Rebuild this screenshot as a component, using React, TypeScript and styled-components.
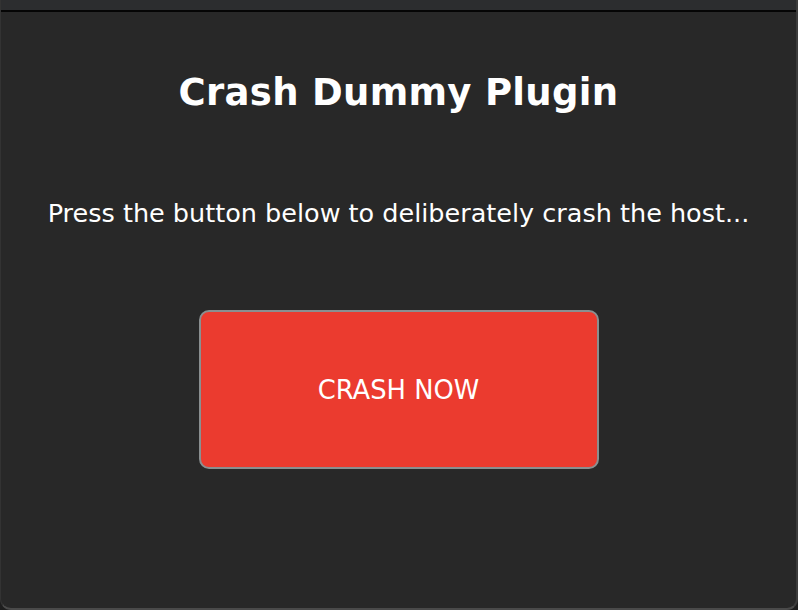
import styled, { createGlobalStyle } from "styled-components";

const GlobalStyle = createGlobalStyle`
    html, body {
        margin: 0;
        padding: 0;
        background-color: #1e1e1e;
        height: 100%;
    }
    #root {
        height: 100%;
    }
`

const Janela = styled.div`
    box-sizing: border-box;
    height: 610px;
    width: 798px;
    display: flex;
    flex-direction: column;
    background-color: #282828;
    border-radius: 0 0 11px 11px;
    border-bottom: 2px solid #4a4a4a;
    border-right: 2px solid #3c3c3c;
    border-left: 1px solid #333;
    overflow: hidden;
`

const BarraTitulo = styled.div`
    height: 10px;
    background-color: #2c2d2f;
    border-bottom: 2px solid #050505;
    flex-shrink: 0;
`

const Conteudo = styled.div`
    flex: 1;
    display: flex;
    flex-direction: column;
    align-items: center;
    font-family: "DejaVu Sans", Verdana, sans-serif;
    color: #ffffff;
`

const Titulo = styled.h1`
    margin: 51px 0 0;
    font-size: 37px;
    font-weight: 700;
    line-height: 60px;
    letter-spacing: 0.3px;
`

const Paragrafo = styled.p`
    margin: 75px 0 0;
    font-size: 25.5px;
    font-weight: 400;
    line-height: 30px;
    white-space: nowrap;
`

const BotaoCrash = styled.button`
    box-sizing: border-box;
    margin-top: 82px;
    width: 400px;
    height: 159px;
    background-color: #eb3b2f;
    border: 2px solid #8a8f90;
    border-radius: 10px;
    color: #ffffff;
    font-family: "DejaVu Sans", Verdana, sans-serif;
    font-size: 25.8px;
    font-weight: 400;
    cursor: pointer;
`

const App = () => {
    return (
        <>
            <GlobalStyle />
            <Janela>
                <BarraTitulo />
                <Conteudo>
                    <Titulo>Crash Dummy Plugin</Titulo>
                    <Paragrafo>Press the button below to deliberately crash the host...</Paragrafo>
                    <BotaoCrash>CRASH NOW</BotaoCrash>
                </Conteudo>
            </Janela>
        </>
    )
}

export default App;
